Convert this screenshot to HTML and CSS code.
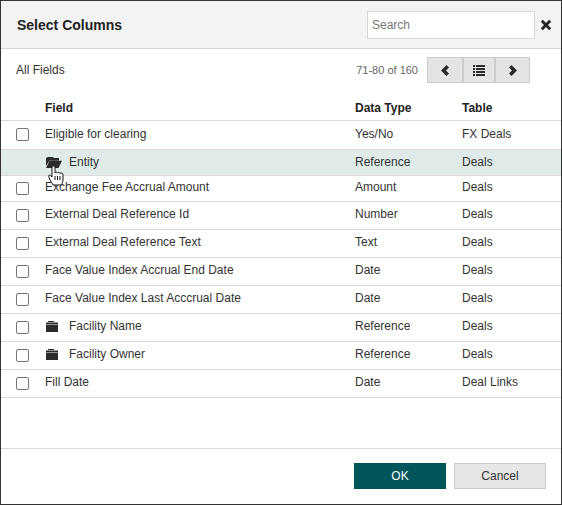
FILE: index.html
```html
<!DOCTYPE html>
<html lang="en">

<head>
  <meta charset="UTF-8" />
  <meta name="viewport" content="width=device-width, initial-scale=1.0" />
  <title>Select Columns</title>
  <link rel="stylesheet" href="styles.css">
</head>

<body>
  <div class="dialog">
    <div class="dialog-header">
      <h1>Select Columns</h1>
      <input class="search" type="text" placeholder="Search" />
      <svg class="close" viewBox="0 0 12 12" width="12" height="12">
        <path d="M2.800 .8 6 4 9.200 .8 11.200 2.800 8 6 11.200 9.200 9.200 11.200 6 8 2.800 11.200 .8 9.200 4 6 .8 2.800Z" />
      </svg>
    </div>

    <div class="toolbar">
      <span class="crumb">All Fields</span>
      <span class="count">71-80 of 160</span>
      <div class="pager">
        <button class="prev" type="button">
          <svg viewBox="0 0 8 11" width="8" height="11"><path d="M5.500 0 8 2.500 5 5.500 8 8.500 5.500 11 0 5.500Z" /></svg>
        </button>
        <button class="list" type="button">
          <svg viewBox="0 0 12 11" width="12" height="11"><path d="M0 0h2v2H0zM3 0h9v2H3zM0 3h2v2H0zM3 3h9v2H3zM0 6h2v2H0zM3 6h9v2H3zM0 9h2v2H0zM3 9h9v2H3z" /></svg>
        </button>
        <button class="next" type="button">
          <svg viewBox="0 0 8 11" width="8" height="11"><path d="M2.500 0 0 2.500 3 5.500 0 8.500 2.500 11 8 5.500Z" /></svg>
        </button>
      </div>
    </div>

    <div class="row head">
      <span></span>
      <span>Field</span>
      <span>Data Type</span>
      <span>Table</span>
    </div>

    <div class="row first">
      <span class="check"></span>
      <span>Eligible for clearing</span>
      <span>Yes/No</span>
      <span>FX Deals</span>
    </div>
    <div class="row active">
      <span></span>
      <span class="folder-cell">
        <svg class="folder-open" viewBox="0 0 16 11" width="16" height="11"><path d="M2 0h5l1 1h5v2.500H3.500L0 9V1ZM3.600 3.800H16L12.500 11H0Z" /></svg>
        Entity
      </span>
      <span>Reference</span>
      <span>Deals</span>
      <svg class="cursor" viewBox="0 0 17 21" width="17" height="21">
        <path d="M4 2.500C4 1.500 4.700 1 5.500 1S7 1.500 7 2.500V8c.5-1 2.200-1 2.500 0 .5-.8 2.200-.8 2.500.4 .8-.6 3-.4 3 1.100V15c0 1.500-1 2.500-1 5H5c-.5-1.500-1.500-2.500-3-5L.7 11.500c-.5-1.200 1-2 2-1L4 12Z" />
        <path class="cursor-line" d="M7 11v4M9.500 11v4M12 11v4" />
      </svg>
    </div>
    <div class="row short">
      <span class="check"></span>
      <span>Exchange Fee Accrual Amount</span>
      <span>Amount</span>
      <span>Deals</span>
    </div>
    <div class="row">
      <span class="check"></span>
      <span>External Deal Reference Id</span>
      <span>Number</span>
      <span>Deals</span>
    </div>
    <div class="row">
      <span class="check"></span>
      <span>External Deal Reference Text</span>
      <span>Text</span>
      <span>Deals</span>
    </div>
    <div class="row">
      <span class="check"></span>
      <span>Face Value Index Accrual End Date</span>
      <span>Date</span>
      <span>Deals</span>
    </div>
    <div class="row">
      <span class="check"></span>
      <span>Face Value Index Last Acccrual Date</span>
      <span>Date</span>
      <span>Deals</span>
    </div>
    <div class="row">
      <span class="check"></span>
      <span class="folder-cell">
        <svg class="folder" viewBox="0 0 12 11" width="12" height="11"><path d="M2 0h6v1H2zM0 1.500h12V3H0zM0 3.500h12V11H0z" /></svg>
        Facility Name
      </span>
      <span>Reference</span>
      <span>Deals</span>
    </div>
    <div class="row">
      <span class="check"></span>
      <span class="folder-cell">
        <svg class="folder" viewBox="0 0 12 11" width="12" height="11"><path d="M2 0h6v1H2zM0 1.500h12V3H0zM0 3.500h12V11H0z" /></svg>
        Facility Owner
      </span>
      <span>Reference</span>
      <span>Deals</span>
    </div>
    <div class="row">
      <span class="check"></span>
      <span>Fill Date</span>
      <span>Date</span>
      <span>Deal Links</span>
    </div>

    <div class="dialog-footer">
      <button class="btn btn-ok" type="button">OK</button>
      <button class="btn btn-cancel" type="button">Cancel</button>
    </div>
  </div>
</body>

</html>
```

FILE: styles.css
```css
html,
body {
  margin: 0;
  padding: 0;
}

body {
  font-family: 'Liberation Sans', Arial, sans-serif;
  font-size: 12px;
  color: #333;
  background: #fff;
}

.dialog {
  box-sizing: border-box;
  width: 562px;
  height: 505px;
  border: 1px solid #333;
  display: flex;
  flex-direction: column;
}

.dialog-header {
  box-sizing: border-box;
  height: 48px;
  flex: none;
  display: flex;
  align-items: flex-start;
  padding: 10px 9px 0 16px;
  background: #f3f3f3;
  border-bottom: 1px solid #d6d6d6;
}

h1 {
  flex: 1;
  margin: 0;
  padding-top: 6px;
  font-size: 14px;
  font-weight: bold;
  color: #222;
}

.search {
  box-sizing: border-box;
  width: 168px;
  height: 28px;
  padding: 0 4px;
  border: 1px solid #d6d6d6;
  background: #fff;
  font-family: inherit;
  font-size: 12px;
}

.search::placeholder {
  color: #777;
}

.close {
  margin: 8px 0 0 5px;
  fill: #222;
}

.toolbar {
  box-sizing: border-box;
  height: 43px;
  flex: none;
  display: flex;
  align-items: flex-start;
  padding: 8px 31px 0 15px;
}

.crumb {
  flex: 1;
  padding-top: 6px;
}

.count {
  color: #666;
  font-size: 11px;
  margin-right: 9px;
  padding-top: 7px;
}

.pager {
  display: flex;
  height: 26px;
}

.pager button {
  box-sizing: border-box;
  height: 26px;
  margin: 0;
  padding: 0;
  display: flex;
  align-items: center;
  justify-content: center;
  background: #e4e4e4;
  border: 1px solid #ccc;
}

.pager .prev {
  width: 36px;
}

.pager .list {
  width: 32px;
}

.pager .next {
  width: 35px;
}

.pager svg {
  fill: #2b2b2b;
}

.row {
  box-sizing: border-box;
  height: 28px;
  flex: none;
  display: grid;
  grid-template-columns: 44px 310px 107px 1fr;
  align-items: start;
  padding-top: 5px;
  border-bottom: 1px solid #d9d9d9;
}

.head {
  height: 29px;
  padding-top: 9px;
  font-weight: bold;
  color: #222;
}

.first {
  height: 29px;
  padding-top: 6px;
}

.short {
  height: 26px;
  padding-top: 4px;
}

.active {
  position: relative;
  height: 26px;
  background: #e0ebe9;
}

.check {
  box-sizing: border-box;
  width: 13px;
  height: 13px;
  margin: 2px 0 0 15px;
  border: 1px solid #767676;
  border-radius: 2px;
  background: #fff;
}

.first .check {
  margin-top: 1px;
}

.folder-cell {
  display: flex;
  align-items: flex-start;
  gap: 11px;
}

.folder,
.folder-open {
  margin: 2px 0 0 1px;
  fill: #2b2b2b;
}

.folder-open {
  margin-right: -4px;
}

.cursor {
  position: absolute;
  left: 47px;
  top: 15px;
  fill: #fff;
  stroke: #111;
  stroke-width: 1;
}

.cursor-line {
  fill: none;
}

.dialog-footer {
  margin-top: auto;
  box-sizing: border-box;
  height: 56px;
  flex: none;
  display: flex;
  align-items: flex-start;
  justify-content: flex-end;
  gap: 8px;
  padding: 14px 15px 0 0;
  border-top: 1px solid #d9d9d9;
}

.btn {
  box-sizing: border-box;
  width: 92px;
  height: 26px;
  font-family: inherit;
  font-size: 12px;
}

.btn-ok {
  border: none;
  background: #00565b;
  color: #fff;
}

.btn-cancel {
  border: 1px solid #ccc;
  background: #e6e6e6;
  color: #333;
}
```
